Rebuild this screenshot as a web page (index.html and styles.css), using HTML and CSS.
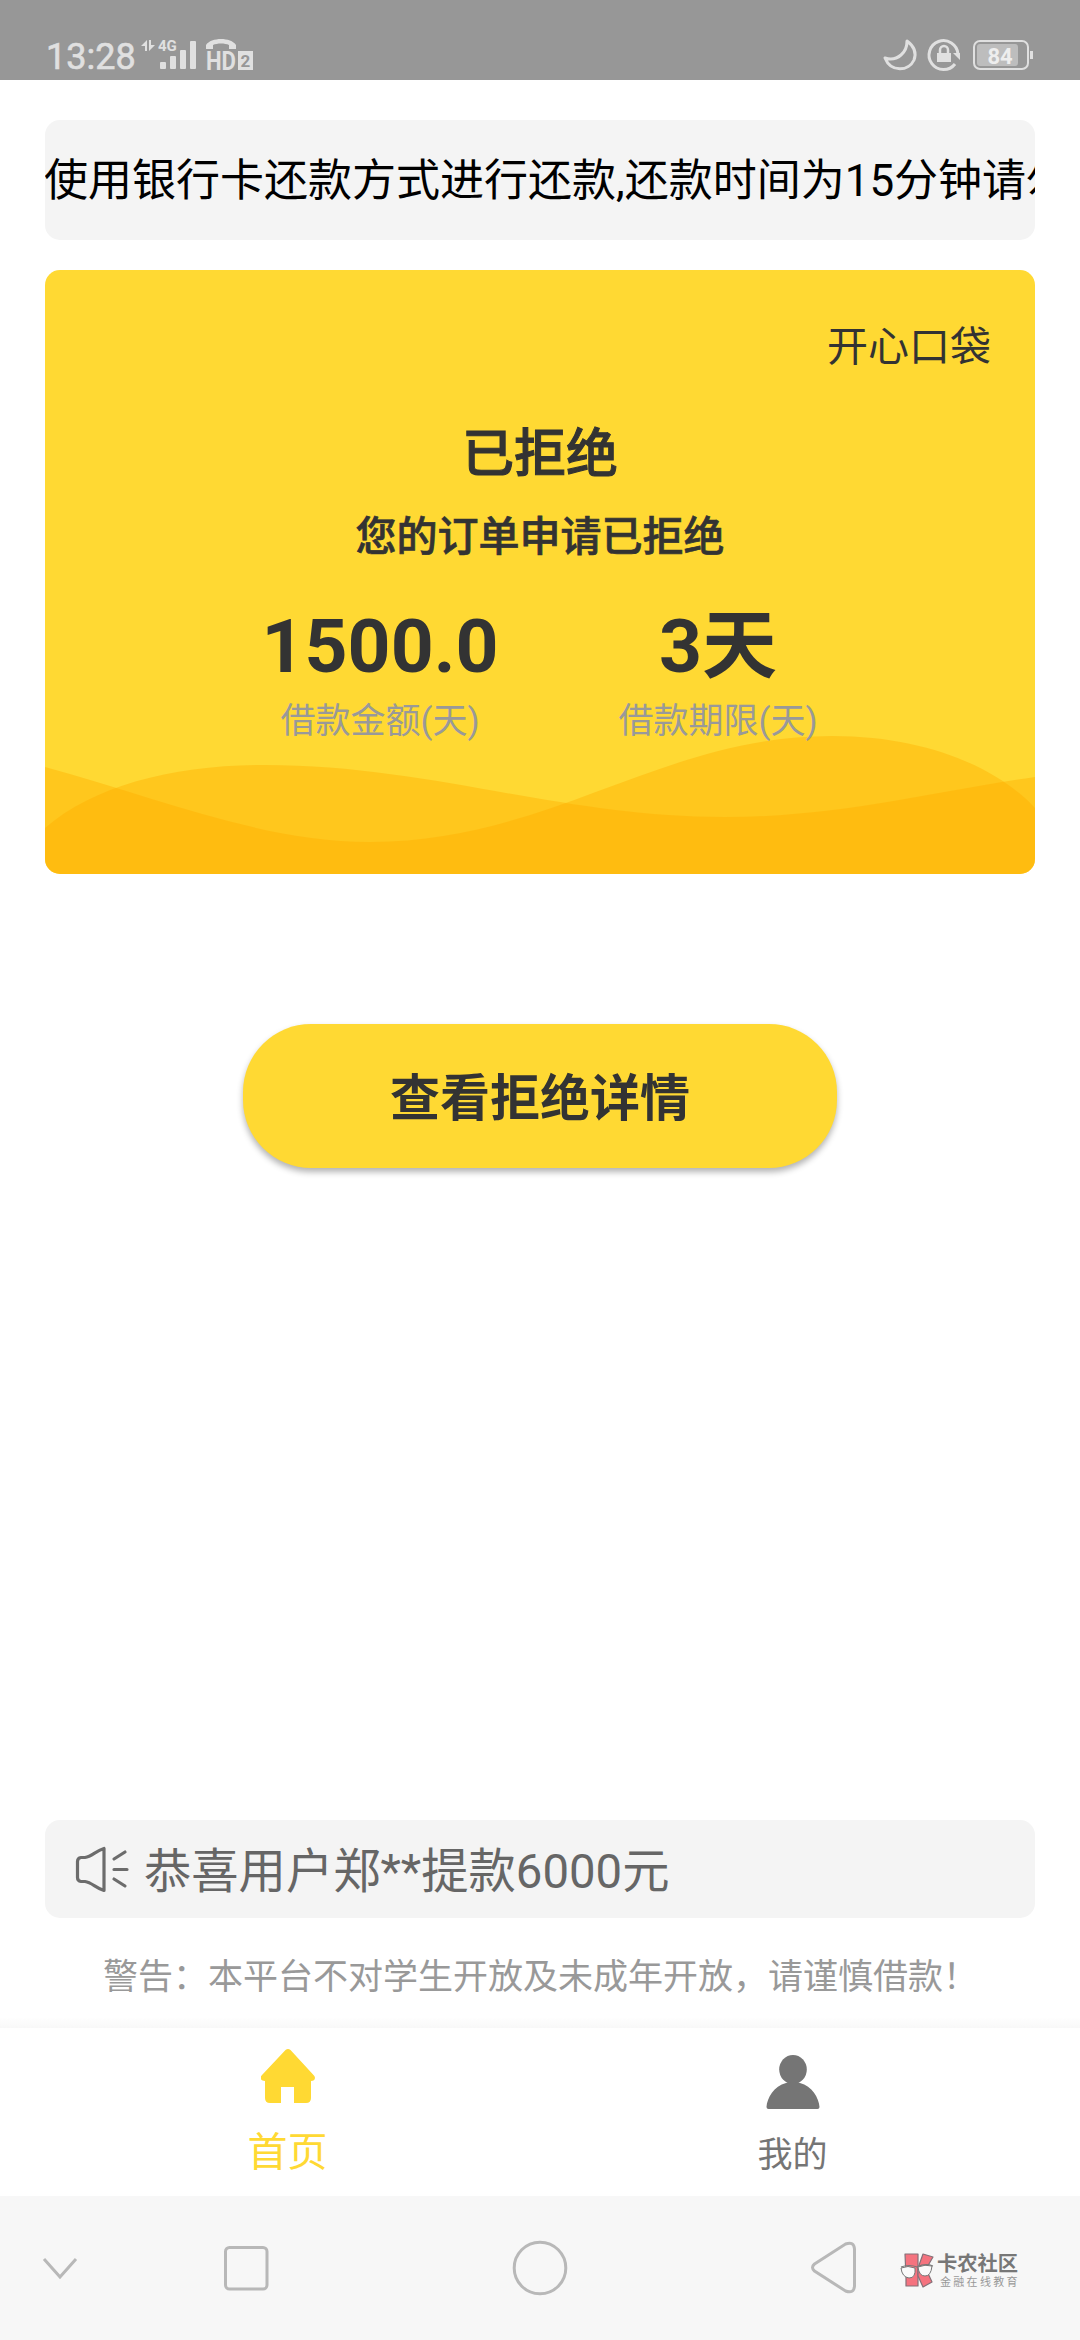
FILE: index.html
```html
<!DOCTYPE html>
<html lang="zh-CN">
<head>
<meta charset="utf-8">
<title>开心口袋</title>
<link rel="stylesheet" href="styles.css">
</head>
<body>
<header class="status">
  <span class="clock">13:28</span>
  <svg class="signal" width="116" height="34" viewBox="140 38 116 34" fill="#e0e0e0">
    <path d="M141 46l6-6v11h-2v-5zM155 45l-6 6v-11h2v5z"/>
    <text x="158" y="51" class="net">4G</text>
    <rect x="160" y="62" width="6" height="7" rx="1"/>
    <rect x="170" y="56" width="6" height="13" rx="1"/>
    <rect x="180" y="50" width="6" height="19" rx="1"/>
    <rect x="190" y="41" width="6" height="28" rx="1"/>
    <path d="M206 49v-4c5-8 25-8 30 0v4h-7v-4c-4-2-12-2-16 0v4z"/>
    <text x="206" y="70" class="hd" textLength="30" lengthAdjust="spacingAndGlyphs">HD</text>
    <rect x="238" y="51" width="15" height="19"/>
    <text x="240.500" y="67" class="sim">2</text>
  </svg>
  <svg class="system" width="154" height="36" viewBox="880 36 154 36" fill="none" stroke="#e0e0e0">
    <path d="M906 41q11 8 7 19c-5 11-23 13-29-2q9 3 16-3q6-5 6-14z" stroke-width="3" stroke-linejoin="round"/>
    <path d="M954 64a14.500 14.500 0 1 1 3-10" stroke-width="3"/>
    <path d="M952 53l7 7v-7z" fill="#e0e0e0" stroke="none"/>
    <rect x="936" y="53" width="14" height="9" fill="#e0e0e0" stroke="none"/>
    <path d="M939 54v-4a4 4 0 0 1 8 0v4" stroke-width="2.500"/>
    <rect x="973" y="41" width="54" height="28" rx="6" stroke-width="2"/>
    <rect x="976" y="44" width="41" height="22" rx="3" fill="#bdbdbd" stroke="none"/>
    <path d="M1030.500 51v8" stroke-width="3"/>
    <text x="986.500" y="63.500" class="battery">84</text>
  </svg>
</header>

<main class="page">
  <div class="marquee">使用银行卡还款方式进行还款,还款时间为15分钟请勿</div>

  <section class="card">
    <svg class="waves" width="990" height="146" viewBox="45 728 990 146">
      <path d="M45 767C150 795 260 842 370 842C550 842 660 736 832 736C930 736 1000 770 1035 808V874H45z"/>
      <path d="M45 828C95 785 175 765 265 765C430 765 560 817 725 817C840 817 930 792 1035 777V874H45z"/>
    </svg>
    <p class="brand">开心口袋</p>
    <h1 class="state">已拒绝</h1>
    <p class="message">您的订单申请已拒绝</p>
    <div class="figures">
      <div><p class="value">1500.0</p><p class="label">借款金额(天)</p></div>
      <div><p class="value">3天</p><p class="label">借款期限(天)</p></div>
    </div>
  </section>

  <button class="details">查看拒绝详情</button>

  <div class="notice">
    <svg width="56" height="48" viewBox="74 1846 56 48" fill="none" stroke="#6c6c6c" stroke-width="3.200" stroke-linejoin="round" stroke-linecap="round">
      <path d="M81 1858.500h4c7-1 10-6 19-9v42c-9-3-12-8-19-9h-4q-3.500-.5-3.500-4v-16q0-3.500 3.500-4zM114 1860l11-7M114 1870.500h13M114 1880l11 7"/>
    </svg>
    <span>恭喜用户郑**提款6000元</span>
  </div>
  <p class="warning">警告：本平台不对学生开放及未成年开放，请谨慎借款！</p>
</main>

<nav class="tabs">
  <a class="tab active">
    <svg width="54" height="54" viewBox="260 2049 54 54" fill="#ffd933"><path d="M284.500 2050q2.500-2 5 0l23 25c3 3 1 6-2.500 6v17q0 5-5 5h-12v-16h-13v16h-11q-5 0-5-5v-17c-4 0-6-3-3-6z"/></svg>
    <span>首页</span>
  </a>
  <a class="tab">
    <svg width="54" height="54" viewBox="765 2055 54 54" fill="#757575"><ellipse cx="792" cy="2069.500" rx="13.800" ry="14.500"/><path d="M785 2083q7-2 14 0c12 3 19 15 19.500 24q0 2-2 2h-49q-2 0-2-2c.5-9 7.500-21 19.500-24z"/></svg>
    <span>我的</span>
  </a>
</nav>

<footer class="system-nav">
  <svg class="hide" width="36" height="24" viewBox="42 2256 36 24"><path d="M44 2259l16 18 16-18"/></svg>
  <svg class="recent" width="46" height="46" viewBox="223 2245 46 46"><rect x="225.500" y="2247.500" width="41.500" height="41.500" rx="4"/></svg>
  <svg class="home" width="56" height="56" viewBox="512 2240 56 56"><circle cx="540" cy="2268" r="25.800"/></svg>
  <svg class="back" width="48" height="54" viewBox="810 2241 48 54"><path d="M814.500 2264l31-20q8.500-3 9 5v37q-.5 8-9 5l-31-20q-4-3.500 0-7z"/></svg>
  <div class="community">
    <svg width="36" height="38" viewBox="899 2252 36 38">
      <g fill="#f5737f" stroke="#857078" stroke-width="1.200" stroke-linejoin="round">
        <path d="M905 2254h13v32h-12v-9z"/>
        <path d="M918 2268l5-14 10 3-7 12 6 13-9 5-5-11z"/>
      </g>
      <path d="M901 2267q8-3 16 0 8-4 16-1" fill="none" stroke="#777" stroke-width="1.200"/>
      <g fill="#fafafa" stroke="#777" stroke-width="1">
        <path d="M901 2268q7-3 14 0 1 10-6 10-7-1-8-10zM918 2267q7-3 14-1-1 10-7 10-6 0-7-9z"/>
      </g>
    </svg>
    <div><p class="name">卡农社区</p><p class="motto">金融在线教育</p></div>
  </div>
</footer>
</body>
</html>
```
FILE: styles.css
```css
* { box-sizing: border-box; }
body {
  margin: 0;
  width: 1080px;
  height: 2340px;
  display: flex;
  flex-direction: column;
  background: #fff;
  color: #333;
  font-family: Roboto, "Noto Sans CJK SC", sans-serif;
  overflow: hidden;
}
p, h1 { margin: 0; }
svg { display: block; flex: none; }

.status {
  height: 80px;
  flex: none;
  padding: 36px 46px 0;
  display: flex;
  background: #979797;
  color: #e0e0e0;
}
.clock { width: 94px; font-size: 36px; line-height: 42px; font-weight: 400; -webkit-text-stroke: .6px #e0e0e0; }
.signal { margin-top: 2px; overflow: visible; }
.system { margin-left: auto; margin-right: -1px; }
.net { font-size: 15px; font-weight: 700; }
.hd { font-size: 25px; font-weight: 700; }
.sim { font-size: 17px; font-weight: 700; fill: #979797; }
.battery { font-size: 22px; font-weight: 700; fill: #eee; stroke: none; }

.page {
  flex: none;
  height: 1937px;
  padding: 40px 45px 0;
  display: flex;
  flex-direction: column;
}
.marquee {
  flex: none;
  height: 120px;
  border-radius: 15px;
  background: #f4f4f4;
  color: #000;
  font-size: 44px;
  line-height: 123px;
  white-space: nowrap;
  overflow: hidden;
  text-indent: -1px;
}
.card {
  flex: none;
  position: relative;
  height: 604px;
  margin-top: 30px;
  border-radius: 15px;
  overflow: hidden;
  background: #ffd933;
  text-align: center;
}
.waves { position: absolute; left: 0; bottom: 0; }
.waves path { fill: #ffad00; fill-opacity: .42; }
.card > p, .card > h1, .figures { position: relative; }
.brand { margin-top: 47px; padding-right: 44px; font-size: 41px; line-height: 60px; text-align: right; }
.state { margin-top: 42px; font-size: 52px; line-height: 72px; font-weight: 500; -webkit-text-stroke: 1px #333; }
.message { margin-top: 16px; font-size: 41px; line-height: 60px; font-weight: 500; -webkit-text-stroke: .7px #333; }
.figures {
  margin: 29px 148px 0 166px;
  display: grid;
  grid-template-columns: 1fr 1fr;
}
.value { font-size: 75px; line-height: 100px; font-weight: 700; }
.label { font-size: 35px; line-height: 52px; color: #999; }

.details {
  flex: none;
  width: 594px;
  height: 144px;
  margin: 150px auto 0;
  padding: 7px 0 0;
  border: 0;
  border-radius: 68px;
  background: #ffd933;
  box-shadow: 0 4px 6px rgba(0, 0, 0, .3);
  color: #333;
  font: 700 50px/137px Roboto, "Noto Sans CJK SC", sans-serif;
}

.notice {
  flex: none;
  height: 98px;
  margin-top: auto;
  padding-left: 29px;
  display: flex;
  align-items: center;
  gap: 14px;
  border-radius: 15px;
  background: #f4f4f4;
  color: #666;
  font-size: 47.3px;
}
.notice span { line-height: 70px; margin-top: 6px; }
.warning {
  margin: 35px 0 14px 58px;
  font-size: 35px;
  line-height: 50px;
  color: #999;
  white-space: nowrap;
}

.tabs {
  flex: none;
  height: 179px;
  padding: 0 35px;
  display: grid;
  grid-template-columns: 505px 505px;
  background: linear-gradient(#fff, #f8f8f8 11px, #fff 11px);
}
.tab {
  display: flex;
  flex-direction: column;
  align-items: center;
  padding-top: 38px;
  gap: 20px;
  font-size: 35px;
  line-height: 54px;
  color: #757575;
}
.tab.active { padding-top: 32px; gap: 23px; font-size: 40px; color: #ffd933; }

.system-nav {
  flex: none;
  height: 144px;
  padding: 0 62px 0 42px;
  display: flex;
  align-items: center;
  background: #f7f7f7;
}
.system-nav > svg { fill: none; stroke: #b8b8b8; stroke-width: 3; }
.recent { margin-left: 145px; }
.home { margin-left: 243px; }
.back { margin-left: 242px; }
.community { margin-left: 41px; display: flex; gap: 2px; padding-top: 5px; }
.name { font-size: 20.3px; line-height: 24px; font-weight: 700; color: #777; white-space: nowrap; }
.motto { padding-left: 3px; font-size: 11px; line-height: 13px; letter-spacing: 2.3px; color: #999; white-space: nowrap; }
```
